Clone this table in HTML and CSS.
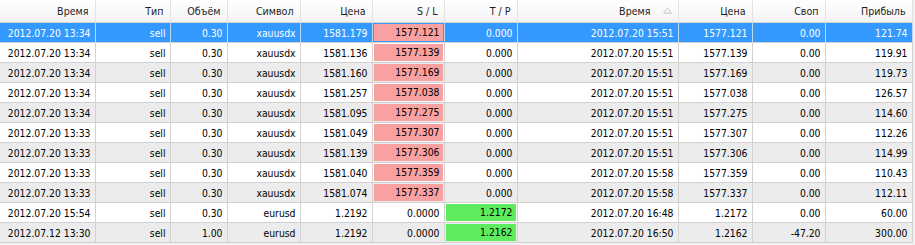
FILE: index.html
```html
<!DOCTYPE html>
<html>
<head>
<meta charset="utf-8">
<link rel="stylesheet" href="styles.css">
</head>
<body>
<table class="grid">
  <colgroup>
    <col class="c-time"><col class="c-type"><col class="c-vol"><col class="c-sym"><col class="c-price"><col class="c-sl"><col class="c-tp"><col class="c-time2"><col class="c-price2"><col class="c-swap"><col class="c-profit">
  </colgroup>
  <thead>
    <tr>
      <th>Время</th><th>Тип</th><th>Объём</th><th>Символ</th><th>Цена</th><th>S / L</th><th>T / P</th>
      <th class="sorted"><span>Время</span><svg class="sort" width="9" height="7" viewBox="0 0 9 7"><path d="M4.5 0.8 L8.3 6.2 L0.7 6.2 Z" fill="none" stroke="#c4c4c4" stroke-width="1"/></svg></th>
      <th>Цена</th><th>Своп</th><th>Прибыль</th>
    </tr>
  </thead>
  <tbody>
    <tr class="sel"><td>2012.07.20 13:34</td><td>sell</td><td>0.30</td><td>xauusdx</td><td>1581.179</td><td class="loss"><span>1577.121</span></td><td>0.000</td><td>2012.07.20 15:51</td><td>1577.121</td><td>0.00</td><td>121.74</td></tr>
    <tr><td>2012.07.20 13:34</td><td>sell</td><td>0.30</td><td>xauusdx</td><td>1581.136</td><td class="loss"><span>1577.139</span></td><td>0.000</td><td>2012.07.20 15:51</td><td>1577.139</td><td>0.00</td><td>119.91</td></tr>
    <tr class="alt"><td>2012.07.20 13:34</td><td>sell</td><td>0.30</td><td>xauusdx</td><td>1581.160</td><td class="loss"><span>1577.169</span></td><td>0.000</td><td>2012.07.20 15:51</td><td>1577.169</td><td>0.00</td><td>119.73</td></tr>
    <tr><td>2012.07.20 13:34</td><td>sell</td><td>0.30</td><td>xauusdx</td><td>1581.257</td><td class="loss"><span>1577.038</span></td><td>0.000</td><td>2012.07.20 15:51</td><td>1577.038</td><td>0.00</td><td>126.57</td></tr>
    <tr class="alt"><td>2012.07.20 13:34</td><td>sell</td><td>0.30</td><td>xauusdx</td><td>1581.095</td><td class="loss"><span>1577.275</span></td><td>0.000</td><td>2012.07.20 15:51</td><td>1577.275</td><td>0.00</td><td>114.60</td></tr>
    <tr><td>2012.07.20 13:33</td><td>sell</td><td>0.30</td><td>xauusdx</td><td>1581.049</td><td class="loss"><span>1577.307</span></td><td>0.000</td><td>2012.07.20 15:51</td><td>1577.307</td><td>0.00</td><td>112.26</td></tr>
    <tr class="alt"><td>2012.07.20 13:33</td><td>sell</td><td>0.30</td><td>xauusdx</td><td>1581.139</td><td class="loss"><span>1577.306</span></td><td>0.000</td><td>2012.07.20 15:51</td><td>1577.306</td><td>0.00</td><td>114.99</td></tr>
    <tr><td>2012.07.20 13:33</td><td>sell</td><td>0.30</td><td>xauusdx</td><td>1581.040</td><td class="loss"><span>1577.359</span></td><td>0.000</td><td>2012.07.20 15:58</td><td>1577.359</td><td>0.00</td><td>110.43</td></tr>
    <tr class="alt"><td>2012.07.20 13:33</td><td>sell</td><td>0.30</td><td>xauusdx</td><td>1581.074</td><td class="loss"><span>1577.337</span></td><td>0.000</td><td>2012.07.20 15:58</td><td>1577.337</td><td>0.00</td><td>112.11</td></tr>
    <tr><td>2012.07.20 15:54</td><td>sell</td><td>0.30</td><td>eurusd</td><td>1.2192</td><td>0.0000</td><td class="gain"><span>1.2172</span></td><td>2012.07.20 16:48</td><td>1.2172</td><td>0.00</td><td>60.00</td></tr>
    <tr class="alt"><td>2012.07.12 13:30</td><td>sell</td><td>1.00</td><td>eurusd</td><td>1.2192</td><td>0.0000</td><td class="gain"><span>1.2162</span></td><td>2012.07.20 16:50</td><td>1.2162</td><td>-47.20</td><td>300.00</td></tr>
  </tbody>
</table>
</body>
</html>
```

FILE: styles.css
```css
html, body {
  margin: 0;
  padding: 0;
  background: #f0f0f0;
}
body {
  width: 915px;
  height: 245px;
  overflow: hidden;
  font-family: "DejaVu Sans Condensed", "DejaVu Sans", sans-serif;
  font-size: 10.3px;
  color: #000;
}
.grid {
  width: 912px;
  border-collapse: collapse;
  table-layout: fixed;
  background: #fff;
}
.c-time { width: 95px; }
.c-type { width: 75px; }
.c-vol { width: 57px; }
.c-sym { width: 73px; }
.c-price { width: 72px; }
.c-sl { width: 72px; }
.c-tp { width: 73px; }
.c-time2 { width: 161px; }
.c-price2 { width: 74px; }
.c-swap { width: 73px; }
.c-profit { width: 87px; }

.grid th {
  height: 22px;
  padding: 0 6px 0 0;
  font-weight: normal;
  font-size: 10.6px;
  text-align: right;
  color: #1e1e1e;
  background: linear-gradient(#ffffff, #f3f3f3);
  border-right: 1px solid #e3e3e3;
  border-bottom: 1px solid #d6d6d6;
  white-space: nowrap;
}
.grid th.sorted span {
  margin-right: 12px;
}
.sort {
  display: inline-block;
  vertical-align: 1px;
}
.grid td {
  height: 19px;
  padding: 0 4px 0 0;
  text-align: right;
  white-space: nowrap;
  border-right: 1px solid #d2d2d2;
  border-bottom: 1px solid #d2d2d2;
}
.grid tr.alt td {
  background: #ececec;
}
.grid tr.sel td {
  background: #3399ff;
  color: #fff;
  border-right-color: #b8d8f8;
}
.grid td.loss,
.grid td.gain {
  padding: 0;
}
.grid td.loss span,
.grid td.gain span {
  display: block;
  height: 17px;
  line-height: 17px;
  margin: 1px;
  padding-right: 3px;
  color: #000;
}
.grid td.loss span {
  background: #f9a1a1;
}
.grid td.gain span {
  background: #5eec5e;
}
```
